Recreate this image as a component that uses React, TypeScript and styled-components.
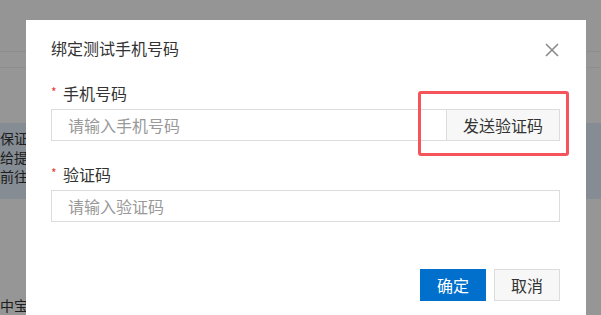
import React from 'react';
import styled, { createGlobalStyle } from 'styled-components';

const GlobalStyle = createGlobalStyle`
    html, body {
        margin: 0;
        padding: 0;
        width: 601px;
        height: 315px;
        overflow: hidden;
        font-family: "Noto Sans CJK SC", "Noto Sans", sans-serif;
    }
`

const App = () => {
    return (
        <>
            <GlobalStyle />
            <StPage>
                <StHeader />
                <StSubBar />
                <StNotice>
                    <p>保证</p>
                    <p>给提供</p>
                    <p>前往</p>
                </StNotice>
                <StBottomText>中宝定</StBottomText>
            </StPage>
            <StMask />
            <StDialog>
                <StDialogHeader>
                    <StTitle>绑定测试手机号码</StTitle>
                    <StClose aria-label="关闭">
                        <svg width="14" height="14" viewBox="0 0 14 14">
                            <path d="M1 1L13 13M13 1L1 13" stroke="#8a8a8a" strokeWidth="1.6" fill="none" />
                        </svg>
                    </StClose>
                </StDialogHeader>
                <StForm>
                    <StField>
                        <StLabel><StStar>*</StStar>手机号码</StLabel>
                        <StInputGroup>
                            <StInput grow placeholder="请输入手机号码" />
                            <StAddonButton>发送验证码</StAddonButton>
                            <StHighlight />
                        </StInputGroup>
                    </StField>
                    <StField>
                        <StLabel><StStar>*</StStar>验证码</StLabel>
                        <StInput placeholder="请输入验证码" />
                    </StField>
                </StForm>
                <StFooter>
                    <StButton primary>确定</StButton>
                    <StButton>取消</StButton>
                </StFooter>
            </StDialog>
        </>
    );
};

const StPage = styled.div`
    width: 601px;
    height: 315px;
    background: #fff;
    display: flex;
    flex-direction: column;
`

const StHeader = styled.div`
    height: 51px;
    border-bottom: 1px solid #f0f0f0;
    background: #fdfdfd;
`

const StSubBar = styled.div`
    height: 15px;
    border-bottom: 1px solid #f2f2f2;
`

const StNotice = styled.div`
    margin-top: 55px;
    height: 76px;
    background: #e2eefc;
    padding-top: 6px;
    box-sizing: border-box;
    color: #333;
    font-size: 14px;
    line-height: 19px;
    p {
        margin: 0;
        white-space: nowrap;
    }
`

const StBottomText = styled.div`
    margin-top: 98px;
    font-size: 14px;
    line-height: 16px;
    color: #333;
    white-space: nowrap;
`

const StMask = styled.div`
    position: fixed;
    inset: 0;
    background: rgba(0, 0, 0, 0.41);
`

const StDialog = styled.div`
    position: fixed;
    left: 26px;
    top: 20px;
    width: 560px;
    height: 320px;
    background: #fff;
    box-sizing: border-box;
    padding: 18px 26px 0 25px;
    display: flex;
    flex-direction: column;
`

const StDialogHeader = styled.div`
    display: flex;
    align-items: center;
    justify-content: space-between;
    height: 20px;
`

const StTitle = styled.div`
    font-size: 16px;
    line-height: 20px;
    color: #333;
`

const StClose = styled.button`
    border: 0;
    background: none;
    padding: 0;
    margin-right: 1px;
    margin-top: 4px;
    width: 14px;
    height: 14px;
    display: flex;
`

const StForm = styled.div`
    margin-top: 25px;
    display: flex;
    flex-direction: column;
    gap: 23px;
`

const StField = styled.div`
    display: flex;
    flex-direction: column;
    gap: 6px;
`

const StLabel = styled.div`
    font-size: 16px;
    line-height: 20px;
    color: #333;
    display: flex;
    align-items: center;
`

const StStar = styled.span`
    color: #e8372f;
    font-size: 12px;
    width: 12px;
    margin-top: -3px;
`

const StInputGroup = styled.div`
    position: relative;
    display: flex;
`

const StInput = styled.input<{ grow?: boolean }>`
    flex: ${props => props.grow ? '1 1 0' : '0 0 auto'};
    min-width: 0;
    height: 32px;
    box-sizing: border-box;
    border: 1px solid #dcdcdc;
    padding: 0 16px;
    font-family: inherit;
    font-size: 16px;
    color: #333;
    outline: none;
    &::placeholder {
        color: #999;
    }
`

const StAddonButton = styled.button`
    width: 113px;
    height: 32px;
    border: 1px solid #dcdcdc;
    border-left: 0;
    background: #f7f7f7;
    font-family: inherit;
    font-size: 16px;
    color: #333;
    padding: 0;
`

const StHighlight = styled.div`
    position: absolute;
    left: 367px;
    top: -18px;
    width: 151px;
    height: 65px;
    box-sizing: border-box;
    border: 3px solid #f5545a;
    border-radius: 3px;
    pointer-events: none;
`

const StFooter = styled.div`
    margin-top: 47px;
    display: flex;
    justify-content: flex-end;
    gap: 8px;
`

const StButton = styled.button<{ primary?: boolean }>`
    width: 66px;
    height: 32px;
    box-sizing: border-box;
    font-family: inherit;
    font-size: 16px;
    padding: 0;
    border: 1px solid ${props => props.primary ? '#0070cc' : '#dcdcdc'};
    background: ${props => props.primary ? '#0070cc' : '#f7f7f7'};
    color: ${props => props.primary ? '#fff' : '#333'};
`

export default App;
